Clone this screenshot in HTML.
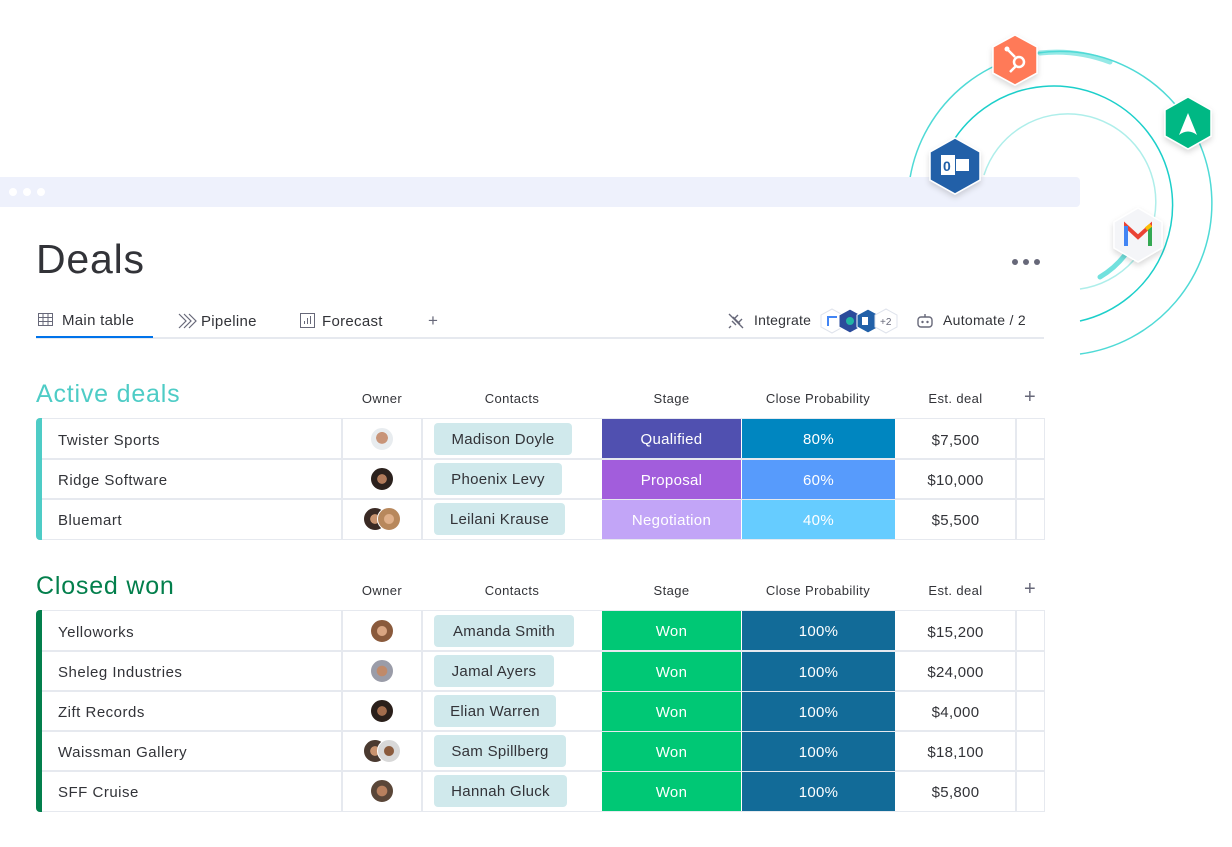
<!DOCTYPE html>
<html><head><meta charset="utf-8">
<style>
*{margin:0;padding:0;box-sizing:border-box}
body{width:1232px;height:847px;background:#fff;font-family:"Liberation Sans",sans-serif;color:#323338;position:relative;overflow:hidden}
.a{position:absolute}
.hdr{position:absolute;font-size:13px;color:#323338;text-align:center;letter-spacing:0.4px}
.cell{position:absolute;height:40px;display:flex;align-items:center;font-size:15px;letter-spacing:0.5px}
.pill{position:absolute;height:32px;background:#d0e9ec;border-radius:4px;font-size:15px;display:flex;align-items:center;justify-content:center;color:#323338;letter-spacing:0.3px}
.st{position:absolute;width:139px;height:39px;color:#fff;font-size:15px;display:flex;align-items:center;justify-content:center;letter-spacing:0.3px;padding-top:2px}
.pr{position:absolute;width:153px;height:39px;color:#fff;font-size:15px;display:flex;align-items:center;justify-content:center;letter-spacing:0.3px;padding-top:2px}
.est{position:absolute;width:121px;height:40px;font-size:15px;display:flex;align-items:center;justify-content:center;letter-spacing:0.3px;padding-top:2px}
.av{position:absolute;width:24px;height:24px;border-radius:50%;border:1px solid #fff}
</style></head><body>

<svg class="a" style="left:0;top:0" width="1232" height="847">
  <defs><filter id="sh" x="-30%" y="-30%" width="160%" height="160%"><feDropShadow dx="0" dy="3" stdDeviation="3" flood-color="#000" flood-opacity="0.15"/></filter></defs>
  <path d="M910 178 A152 152 0 1 1 1080 354" fill="none" stroke="#4fdad6" stroke-width="1.5"/>
  <path d="M1040 53 A152 152 0 0 1 1110 62" fill="none" stroke="#4fdad6" stroke-width="5" stroke-linecap="round" opacity="0.6"/>
  <path d="M948 150 A119 119 0 1 1 1080 321" fill="none" stroke="#1ccfca" stroke-width="1.5"/>
  <path d="M984 175 A88 88 0 1 1 1080 289" fill="none" stroke="#aeeeea" stroke-width="1.5"/>
  <path d="M1100 277 A88 88 0 0 0 1125 255" fill="none" stroke="#4fdad6" stroke-width="5" stroke-linecap="round" opacity="0.8"/>
</svg>

<div class="a" style="left:0;top:177px;width:1080px;height:30px;background:#eef1fc;border-radius:0 4px 4px 0"></div>
<div class="a" style="left:9px;top:188px;width:8px;height:8px;border-radius:50%;background:#fff"></div>
<div class="a" style="left:23px;top:188px;width:8px;height:8px;border-radius:50%;background:#fff"></div>
<div class="a" style="left:37px;top:188px;width:8px;height:8px;border-radius:50%;background:#fff"></div>

<svg class="a" style="left:0;top:0" width="1232" height="847">
  <g filter="url(#sh)">
    <polygon points="1015,35 1037,47 1037,73 1015,85 993,73 993,47" fill="#ff7a59" stroke="#fff" stroke-width="1.5"/>
    <polygon points="1188,97 1211,110 1211,136 1188,149 1165,136 1165,110" fill="#00b884" stroke="#fff" stroke-width="1.5"/>
    <polygon points="955,138 980,152 980,180 955,194 930,180 930,152" fill="#2160a8" stroke="#fff" stroke-width="1.5"/>
    <polygon points="1138,208 1162,222 1162,248 1138,262 1114,248 1114,222" fill="#f4f5f8" stroke="#fff" stroke-width="1.5"/>
  </g>
  <g stroke="#fff" stroke-width="2.5" fill="none"><circle cx="1019" cy="62" r="5"/><line x1="1015" y1="57" x2="1008" y2="50"/><line x1="1016" y1="66" x2="1010" y2="72"/></g>
  <circle cx="1007" cy="49" r="2.5" fill="#fff"/>
  <path d="M1188 113 L1197 135 Q1188 128 1179 135 Z" fill="#fff"/>
  <rect x="941" y="155" width="14" height="20" fill="#fff"/><text x="943" y="171" font-size="14" font-weight="bold" fill="#2160a8" font-family="Liberation Sans">0</text>
  <rect x="956" y="159" width="13" height="12" fill="#fff"/>
  <path d="M1126 246 V226 L1138 237 L1150 226 V246" fill="none" stroke="#ea4335" stroke-width="4"/>
  <line x1="1126" y1="226" x2="1126" y2="246" stroke="#4285f4" stroke-width="4"/>
  <line x1="1150" y1="227" x2="1150" y2="246" stroke="#34a853" stroke-width="4"/>
  <line x1="1146" y1="229" x2="1151" y2="225" stroke="#fbbc04" stroke-width="4"/>
</svg>

<div class="a" style="left:36px;top:236px;font-size:41px;color:#323338;letter-spacing:0.8px">Deals</div>
<div class="a" style="left:1012px;top:259px;width:6px;height:6px;border-radius:50%;background:#676879"></div>
<div class="a" style="left:1023px;top:259px;width:6px;height:6px;border-radius:50%;background:#676879"></div>
<div class="a" style="left:1034px;top:259px;width:6px;height:6px;border-radius:50%;background:#676879"></div>

<div class="a" style="left:36px;top:337px;width:1008px;height:2px;background:#e6e9ef"></div>
<div class="a" style="left:36px;top:336px;width:117px;height:2px;background:#0073ea"></div>
<svg class="a" style="left:38px;top:313px" width="16" height="14"><rect x="0.5" y="0.5" width="14" height="12" fill="none" stroke="#676879"/><path d="M0.5 4.5H14.5M0.5 8.5H14.5M5 .5V12.5M10 .5V12.5" stroke="#676879"/></svg>
<div class="a" style="left:62px;top:312px;font-size:15px;letter-spacing:0.3px">Main table</div>
<svg class="a" style="left:178px;top:313px" width="20" height="16"><path d="M1 1l7 7-7 7M6 1l7 7-7 7M11 1l7 7-7 7" fill="none" stroke="#676879" stroke-width="1.2"/></svg>
<div class="a" style="left:201px;top:313px;font-size:15px;letter-spacing:0.3px">Pipeline</div>
<svg class="a" style="left:300px;top:313px" width="16" height="16"><rect x="0.5" y="0.5" width="14" height="14" fill="none" stroke="#676879"/><path d="M4.5 11V8M7.5 11V5M10.5 11V3" stroke="#676879"/></svg>
<div class="a" style="left:322px;top:313px;font-size:15px;letter-spacing:0.3px">Forecast</div>
<div class="a" style="left:428px;top:311px;font-size:17px;color:#676879">+</div>

<svg class="a" style="left:727px;top:312px" width="18" height="18"><path d="M2 2L16 16M6 5l7 7M5 9l4 4M11 3l-3 3M15 7l-3 3M4 14l-2 2" fill="none" stroke="#676879" stroke-width="1.4"/></svg>
<div class="a" style="left:754px;top:312px;font-size:14px;letter-spacing:0.2px">Integrate</div>
<svg class="a" style="left:820px;top:307px" width="80" height="28">
  <polygon points="12,2 23,8 23,20 12,26 1,20 1,8" fill="#fff" stroke="#dfe3ec"/>
  <rect x="7" y="9" width="10" height="10" fill="#4285f4"/><rect x="9" y="11" width="8" height="8" fill="#fff"/>
  <polygon points="30,2 41,8 41,20 30,26 19,20 19,8" fill="#2b4b9b" stroke="#fff"/><circle cx="30" cy="14" r="4" fill="#22b5a4"/>
  <polygon points="48,2 59,8 59,20 48,26 37,20 37,8" fill="#2160a8" stroke="#fff"/><rect x="42" y="10" width="6" height="8" fill="#fff"/>
  <polygon points="66,2 77,8 77,20 66,26 55,20 55,8" fill="#fff" stroke="#dfe3ec"/>
  <text x="60" y="18" font-size="10" fill="#676879" font-family="Liberation Sans">+2</text>
</svg>
<svg class="a" style="left:916px;top:313px" width="18" height="16"><rect x="2" y="4" width="14" height="10" rx="3" fill="none" stroke="#676879" stroke-width="1.4"/><path d="M9 1v3" stroke="#676879" stroke-width="1.4"/><circle cx="6.5" cy="9" r="1.2" fill="#676879"/><circle cx="11.5" cy="9" r="1.2" fill="#676879"/></svg>
<div class="a" style="left:943px;top:312px;font-size:14px;letter-spacing:0.3px">Automate / 2</div>

<!-- Active deals -->
<div class="a" style="left:36px;top:380px;font-size:25px;color:#4eccc6;letter-spacing:0.8px">Active deals</div>
<div class="hdr" style="left:342px;top:391px;width:80px">Owner</div>
<div class="hdr" style="left:422px;top:391px;width:180px">Contacts</div>
<div class="hdr" style="left:602px;top:391px;width:139px">Stage</div>
<div class="hdr" style="left:741px;top:391px;width:154px">Close Probability</div>
<div class="hdr" style="left:895px;top:391px;width:121px">Est. deal</div>
<div class="hdr" style="left:1016px;top:386px;width:28px;font-size:20px;color:#676879">+</div>

<div class="a" style="left:36px;top:418px;width:1009px;height:122px;border:1px solid #e6e9ef;border-left:none;border-radius:4px 0 0 4px"></div>
<div class="a" style="left:36px;top:418px;width:6px;height:122px;background:#4eccc6;border-radius:4px 0 0 4px"></div>
<div class="a" style="left:42px;top:458px;width:1002px;height:2px;background:#e6e9ef"></div>
<div class="a" style="left:42px;top:498px;width:1002px;height:2px;background:#e6e9ef"></div>
<div class="a" style="left:341px;top:419px;width:2px;height:120px;background:#e6e9ef"></div>
<div class="a" style="left:421px;top:419px;width:2px;height:120px;background:#e6e9ef"></div>
<div class="a" style="left:1015px;top:419px;width:2px;height:120px;background:#e6e9ef"></div>

<div class="cell" style="left:58px;top:420px">Twister Sports</div>
<div class="cell" style="left:58px;top:460px">Ridge Software</div>
<div class="cell" style="left:58px;top:500px">Bluemart</div>
<div class="av" style="left:370px;top:427px;background:radial-gradient(circle at 50% 45%,#c89478 35%,#e8ecef 37%)"></div>
<div class="av" style="left:370px;top:467px;background:radial-gradient(circle at 50% 50%,#b07a5a 30%,#2b211d 32%)"></div>
<div class="av" style="left:363px;top:507px;background:radial-gradient(circle at 50% 50%,#c8936f 30%,#3a2a24 32%)"></div>
<div class="av" style="left:377px;top:507px;background:radial-gradient(circle at 50% 50%,#e0b08a 30%,#b8885c 34%)"></div>
<div class="pill" style="left:434px;top:423px;width:138px">Madison Doyle</div>
<div class="pill" style="left:434px;top:463px;width:128px">Phoenix Levy</div>
<div class="pill" style="left:434px;top:503px;width:131px">Leilani Krause</div>
<div class="st" style="left:602px;top:419px;background:#5050b0">Qualified</div>
<div class="st" style="left:602px;top:460px;background:#a25ddc">Proposal</div>
<div class="st" style="left:602px;top:500px;background:#c2a5f7">Negotiation</div>
<div class="pr" style="left:742px;top:419px;background:#0086c0">80%</div>
<div class="pr" style="left:742px;top:460px;background:#579bfc">60%</div>
<div class="pr" style="left:742px;top:500px;background:#66ccff">40%</div>
<div class="est" style="left:895px;top:419px">$7,500</div>
<div class="est" style="left:895px;top:459px">$10,000</div>
<div class="est" style="left:895px;top:499px">$5,500</div>

<!-- Closed won -->
<div class="a" style="left:36px;top:572px;font-size:25px;color:#037f4c;letter-spacing:0.8px">Closed won</div>
<div class="hdr" style="left:342px;top:583px;width:80px">Owner</div>
<div class="hdr" style="left:422px;top:583px;width:180px">Contacts</div>
<div class="hdr" style="left:602px;top:583px;width:139px">Stage</div>
<div class="hdr" style="left:741px;top:583px;width:154px">Close Probability</div>
<div class="hdr" style="left:895px;top:583px;width:121px">Est. deal</div>
<div class="hdr" style="left:1016px;top:578px;width:28px;font-size:20px;color:#676879">+</div>

<div class="a" style="left:36px;top:610px;width:1009px;height:202px;border:1px solid #e6e9ef;border-left:none;border-radius:4px 0 0 4px"></div>
<div class="a" style="left:36px;top:610px;width:6px;height:202px;background:#037f4c;border-radius:4px 0 0 4px"></div>
<div class="a" style="left:42px;top:650px;width:1002px;height:2px;background:#e6e9ef"></div>
<div class="a" style="left:42px;top:690px;width:1002px;height:2px;background:#e6e9ef"></div>
<div class="a" style="left:42px;top:730px;width:1002px;height:2px;background:#e6e9ef"></div>
<div class="a" style="left:42px;top:770px;width:1002px;height:2px;background:#e6e9ef"></div>
<div class="a" style="left:341px;top:611px;width:2px;height:200px;background:#e6e9ef"></div>
<div class="a" style="left:421px;top:611px;width:2px;height:200px;background:#e6e9ef"></div>
<div class="a" style="left:1015px;top:611px;width:2px;height:200px;background:#e6e9ef"></div>

<div class="cell" style="left:58px;top:612px">Yelloworks</div>
<div class="cell" style="left:58px;top:652px">Sheleg Industries</div>
<div class="cell" style="left:58px;top:692px">Zift Records</div>
<div class="cell" style="left:58px;top:732px">Waissman Gallery</div>
<div class="cell" style="left:58px;top:772px">SFF Cruise</div>
<div class="av" style="left:370px;top:619px;background:radial-gradient(circle at 50% 50%,#d9a582 30%,#8a5a3c 34%)"></div>
<div class="av" style="left:370px;top:659px;background:radial-gradient(circle at 50% 50%,#c08a6a 32%,#9a9ca8 36%)"></div>
<div class="av" style="left:370px;top:699px;background:radial-gradient(circle at 50% 50%,#a26c4c 30%,#2a1f1a 32%)"></div>
<div class="av" style="left:363px;top:739px;background:radial-gradient(circle at 50% 50%,#c8936f 30%,#4a3a30 32%)"></div>
<div class="av" style="left:377px;top:739px;background:radial-gradient(circle at 50% 50%,#8a5a3c 30%,#d8d8d8 34%)"></div>
<div class="av" style="left:370px;top:779px;background:radial-gradient(circle at 50% 50%,#b8805e 32%,#5a4638 36%)"></div>
<div class="pill" style="left:434px;top:615px;width:140px">Amanda Smith</div>
<div class="pill" style="left:434px;top:655px;width:120px">Jamal Ayers</div>
<div class="pill" style="left:434px;top:695px;width:122px">Elian Warren</div>
<div class="pill" style="left:434px;top:735px;width:132px">Sam Spillberg</div>
<div class="pill" style="left:434px;top:775px;width:133px">Hannah Gluck</div>
<div class="st" style="left:602px;top:611px;background:#00c875">Won</div>
<div class="st" style="left:602px;top:652px;background:#00c875">Won</div>
<div class="st" style="left:602px;top:692px;background:#00c875">Won</div>
<div class="st" style="left:602px;top:732px;background:#00c875">Won</div>
<div class="st" style="left:602px;top:772px;background:#00c875">Won</div>
<div class="pr" style="left:742px;top:611px;background:#126b98">100%</div>
<div class="pr" style="left:742px;top:652px;background:#126b98">100%</div>
<div class="pr" style="left:742px;top:692px;background:#126b98">100%</div>
<div class="pr" style="left:742px;top:732px;background:#126b98">100%</div>
<div class="pr" style="left:742px;top:772px;background:#126b98">100%</div>
<div class="est" style="left:895px;top:611px">$15,200</div>
<div class="est" style="left:895px;top:651px">$24,000</div>
<div class="est" style="left:895px;top:691px">$4,000</div>
<div class="est" style="left:895px;top:731px">$18,100</div>
<div class="est" style="left:895px;top:771px">$5,800</div>
</body></html>
